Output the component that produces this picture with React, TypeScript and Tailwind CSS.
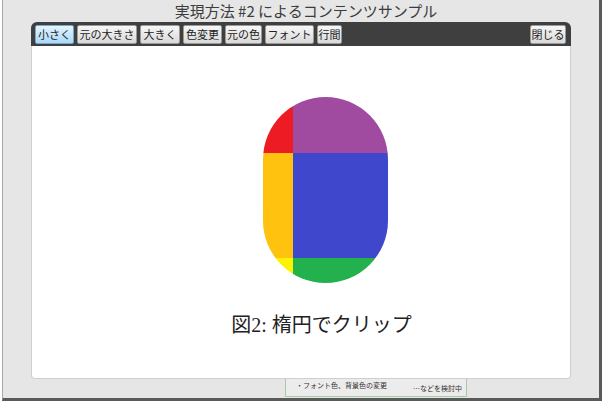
import React from 'react';

const tools = [
  { label: '小さく', w: 'w-[39px]', active: true },
  { label: '元の大きさ', w: 'w-[60px]' },
  { label: '大きく', w: 'w-[40px]' },
  { label: '色変更', w: 'w-[39px]' },
  { label: '元の色', w: 'w-[37px]' },
  { label: 'フォント', w: 'w-[49px]' },
  { label: '行間', w: 'w-[25px]' },
];

function ToolButton({ label, w, active }: { label: string; w: string; active?: boolean }) {
  return (
    <button
      className={
        active
          ? `${w} h-[19px] rounded-[2px] border border-[#7aa7c7] bg-gradient-to-b from-[#e4f4fe] to-[#a9d9f7] text-[11px] leading-none text-[#222]`
          : `${w} h-[19px] rounded-[2px] border border-[#9a9a9a] bg-gradient-to-b from-[#f7f7f7] to-[#d9d9d9] text-[11px] leading-none text-[#222]`
      }
    >
      {label}
    </button>
  );
}

export default function App() {
  return (
    <div className="h-[406px] w-[608px] bg-white font-['Noto_Sans_CJK_JP',sans-serif]">
      <div className="ml-[2px] flex h-[401px] w-[600px] flex-col border-b-[3px] border-l border-r-[3px] border-b-[#5a5a5a] border-l-[#a8a8a8] border-r-[#5a5a5a] bg-[#e6e6e6]">
        <div className="flex h-[22px] items-center justify-center pl-[10px] text-[15px] text-[#3c3c3c]">
          実現方法 #2 によるコンテンツサンプル
        </div>

        <div className="ml-[28px] w-[540px]">
          <div className="flex h-[24px] items-center gap-[3px] rounded-t-[6px] bg-[#3f3f3f] pl-[4px] pr-[5px]">
            {tools.map((t) => (
              <ToolButton key={t.label} {...t} />
            ))}
            <div className="flex-1" />
            <ToolButton label="閉じる" w="w-[36px]" />
          </div>

          <div className="flex h-[333px] flex-col items-center rounded-b-[4px] border border-t-0 border-[#cfcfcf] bg-white pl-[48px] pt-[51px]">
            <div className="grid h-[186px] w-[125px] grid-cols-[30px_95px] grid-rows-[56px_105px_25px] overflow-hidden rounded-full">
              <div className="bg-[#ed1c24]" />
              <div className="bg-[#a04aa0]" />
              <div className="bg-[#ffc20e]" />
              <div className="bg-[#3f48cc]" />
              <div className="bg-[#fff200]" />
              <div className="bg-[#22b14c]" />
            </div>
            <div className="mt-[32px] mr-[7px] font-['Liberation_Serif','Noto_Sans_CJK_JP',serif] text-[20px] leading-none text-[#222]">
              図2: 楕円でクリップ
            </div>
          </div>
        </div>

        <div className="ml-[282px] flex h-[18px] w-[182px] items-start border-x border-b border-[#9fcf9f] bg-[#ececec] pl-[10px] pt-[3px] text-[7px] leading-none text-[#333]">
          <span>・フォント色、背景色の変更</span>
          <span className="ml-auto mr-[4px] mt-[3px]">…などを検討中</span>
        </div>
      </div>
    </div>
  );
}
